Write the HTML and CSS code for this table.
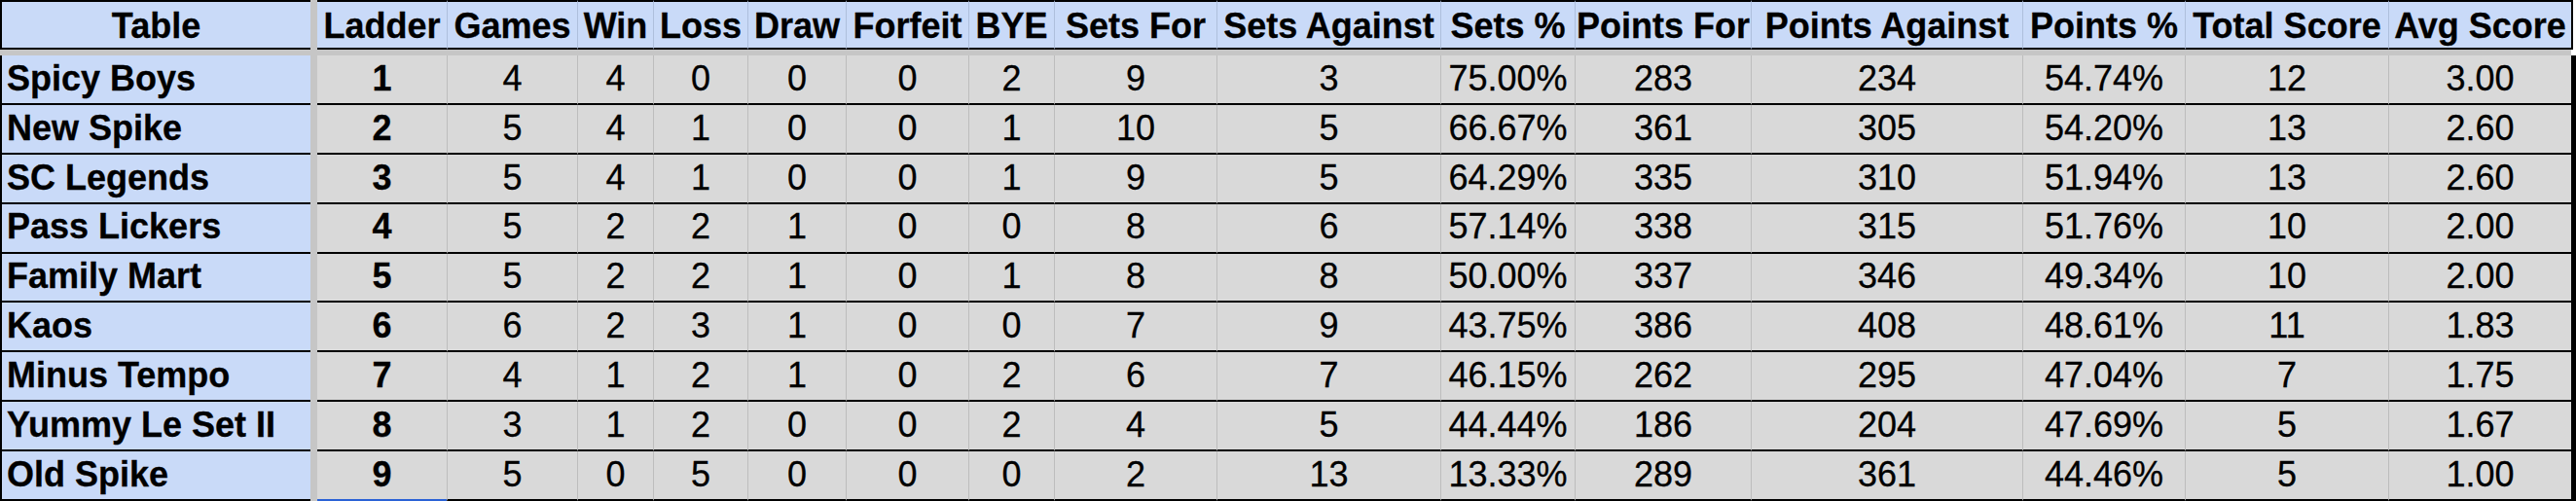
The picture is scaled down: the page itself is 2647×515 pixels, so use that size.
FILE: index.html
```html
<!DOCTYPE html>
<html lang="en">
<head>
<meta charset="utf-8">
<title>Ladder</title>
<link rel="stylesheet" href="styles.css">
</head>
<body>
<div class="sheet">
  <div class="freeze-col"></div>
  <div class="freeze-row"></div>

  <div class="hd name"><span class="t">Table</span></div>
  <div class="hd first"><span class="t">Ladder</span></div>
  <div class="hd"><span class="t">Games</span></div>
  <div class="hd"><span class="t">Win</span></div>
  <div class="hd"><span class="t">Loss</span></div>
  <div class="hd"><span class="t">Draw</span></div>
  <div class="hd"><span class="t">Forfeit</span></div>
  <div class="hd"><span class="t">BYE</span></div>
  <div class="hd"><span class="t">Sets For</span></div>
  <div class="hd"><span class="t">Sets Against</span></div>
  <div class="hd"><span class="t">Sets %</span></div>
  <div class="hd"><span class="t">Points For</span></div>
  <div class="hd"><span class="t">Points Against</span></div>
  <div class="hd"><span class="t">Points %</span></div>
  <div class="hd"><span class="t">Total Score</span></div>
  <div class="hd last"><span class="t">Avg Score</span></div>

  <div class="team"><span class="t">Spicy Boys</span></div><div class="c rank"><span class="t">1</span></div><div class="c"><span class="t">4</span></div><div class="c"><span class="t">4</span></div><div class="c"><span class="t">0</span></div><div class="c"><span class="t">0</span></div><div class="c"><span class="t">0</span></div><div class="c"><span class="t">2</span></div><div class="c"><span class="t">9</span></div><div class="c"><span class="t">3</span></div><div class="c"><span class="t">75.00%</span></div><div class="c"><span class="t">283</span></div><div class="c"><span class="t">234</span></div><div class="c"><span class="t">54.74%</span></div><div class="c"><span class="t">12</span></div><div class="c end"><span class="t">3.00</span></div>
  <div class="team"><span class="t">New Spike</span></div><div class="c rank"><span class="t">2</span></div><div class="c"><span class="t">5</span></div><div class="c"><span class="t">4</span></div><div class="c"><span class="t">1</span></div><div class="c"><span class="t">0</span></div><div class="c"><span class="t">0</span></div><div class="c"><span class="t">1</span></div><div class="c"><span class="t">10</span></div><div class="c"><span class="t">5</span></div><div class="c"><span class="t">66.67%</span></div><div class="c"><span class="t">361</span></div><div class="c"><span class="t">305</span></div><div class="c"><span class="t">54.20%</span></div><div class="c"><span class="t">13</span></div><div class="c end"><span class="t">2.60</span></div>
  <div class="team"><span class="t">SC Legends</span></div><div class="c rank"><span class="t">3</span></div><div class="c"><span class="t">5</span></div><div class="c"><span class="t">4</span></div><div class="c"><span class="t">1</span></div><div class="c"><span class="t">0</span></div><div class="c"><span class="t">0</span></div><div class="c"><span class="t">1</span></div><div class="c"><span class="t">9</span></div><div class="c"><span class="t">5</span></div><div class="c"><span class="t">64.29%</span></div><div class="c"><span class="t">335</span></div><div class="c"><span class="t">310</span></div><div class="c"><span class="t">51.94%</span></div><div class="c"><span class="t">13</span></div><div class="c end"><span class="t">2.60</span></div>
  <div class="team"><span class="t">Pass Lickers</span></div><div class="c rank"><span class="t">4</span></div><div class="c"><span class="t">5</span></div><div class="c"><span class="t">2</span></div><div class="c"><span class="t">2</span></div><div class="c"><span class="t">1</span></div><div class="c"><span class="t">0</span></div><div class="c"><span class="t">0</span></div><div class="c"><span class="t">8</span></div><div class="c"><span class="t">6</span></div><div class="c"><span class="t">57.14%</span></div><div class="c"><span class="t">338</span></div><div class="c"><span class="t">315</span></div><div class="c"><span class="t">51.76%</span></div><div class="c"><span class="t">10</span></div><div class="c end"><span class="t">2.00</span></div>
  <div class="team"><span class="t">Family Mart</span></div><div class="c rank"><span class="t">5</span></div><div class="c"><span class="t">5</span></div><div class="c"><span class="t">2</span></div><div class="c"><span class="t">2</span></div><div class="c"><span class="t">1</span></div><div class="c"><span class="t">0</span></div><div class="c"><span class="t">1</span></div><div class="c"><span class="t">8</span></div><div class="c"><span class="t">8</span></div><div class="c"><span class="t">50.00%</span></div><div class="c"><span class="t">337</span></div><div class="c"><span class="t">346</span></div><div class="c"><span class="t">49.34%</span></div><div class="c"><span class="t">10</span></div><div class="c end"><span class="t">2.00</span></div>
  <div class="team"><span class="t">Kaos</span></div><div class="c rank"><span class="t">6</span></div><div class="c"><span class="t">6</span></div><div class="c"><span class="t">2</span></div><div class="c"><span class="t">3</span></div><div class="c"><span class="t">1</span></div><div class="c"><span class="t">0</span></div><div class="c"><span class="t">0</span></div><div class="c"><span class="t">7</span></div><div class="c"><span class="t">9</span></div><div class="c"><span class="t">43.75%</span></div><div class="c"><span class="t">386</span></div><div class="c"><span class="t">408</span></div><div class="c"><span class="t">48.61%</span></div><div class="c"><span class="t">11</span></div><div class="c end"><span class="t">1.83</span></div>
  <div class="team"><span class="t">Minus Tempo</span></div><div class="c rank"><span class="t">7</span></div><div class="c"><span class="t">4</span></div><div class="c"><span class="t">1</span></div><div class="c"><span class="t">2</span></div><div class="c"><span class="t">1</span></div><div class="c"><span class="t">0</span></div><div class="c"><span class="t">2</span></div><div class="c"><span class="t">6</span></div><div class="c"><span class="t">7</span></div><div class="c"><span class="t">46.15%</span></div><div class="c"><span class="t">262</span></div><div class="c"><span class="t">295</span></div><div class="c"><span class="t">47.04%</span></div><div class="c"><span class="t">7</span></div><div class="c end"><span class="t">1.75</span></div>
  <div class="team"><span class="t">Yummy Le Set II</span></div><div class="c rank"><span class="t">8</span></div><div class="c"><span class="t">3</span></div><div class="c"><span class="t">1</span></div><div class="c"><span class="t">2</span></div><div class="c"><span class="t">0</span></div><div class="c"><span class="t">0</span></div><div class="c"><span class="t">2</span></div><div class="c"><span class="t">4</span></div><div class="c"><span class="t">5</span></div><div class="c"><span class="t">44.44%</span></div><div class="c"><span class="t">186</span></div><div class="c"><span class="t">204</span></div><div class="c"><span class="t">47.69%</span></div><div class="c"><span class="t">5</span></div><div class="c end"><span class="t">1.67</span></div>
  <div class="team"><span class="t">Old Spike</span></div><div class="c rank sel"><span class="t">9</span></div><div class="c"><span class="t">5</span></div><div class="c"><span class="t">0</span></div><div class="c"><span class="t">5</span></div><div class="c"><span class="t">0</span></div><div class="c"><span class="t">0</span></div><div class="c"><span class="t">0</span></div><div class="c"><span class="t">2</span></div><div class="c"><span class="t">13</span></div><div class="c"><span class="t">13.33%</span></div><div class="c"><span class="t">289</span></div><div class="c"><span class="t">361</span></div><div class="c"><span class="t">44.46%</span></div><div class="c"><span class="t">5</span></div><div class="c end"><span class="t">1.00</span></div>
</div>
</body>
</html>
```

FILE: styles.css
```css
html, body {
  margin: 0;
  padding: 0;
  background: #ffffff;
}

.sheet {
  display: grid;
  grid-template-columns: 319px 7px 133px 134px 78px 97px 101px 126px 88px 167px 230px 138px 181px 279px 167px 209px 193px;
  grid-template-rows: 51px 6px repeat(9, 50.9px);
  width: 2647px;
  font-family: "Liberation Sans", Arial, sans-serif;
  font-size: 36px;
  color: #000;
}

.freeze-col {
  grid-column: 2;
  grid-row: 1 / -1;
  background: #c6c6c6;
}

.freeze-row {
  grid-column: 1 / -1;
  grid-row: 2;
  background: #c6c6c6;
  margin-right: 5px;
}

.sheet > div {
  box-sizing: border-box;
  min-width: 0;
  white-space: nowrap;
  overflow: hidden;
}

.t {
  display: inline-block;
  line-height: 1.15;
  -webkit-text-stroke: 0.3px #000;
}

.hd {
  background: #c9daf8;
  font-weight: bold;
  display: flex;
  align-items: center;
  justify-content: center;
  padding-top: 2px;
  border-top: 2px solid #000;
  border-bottom: 2px solid #000;
  border-left: 1px solid #aebfdc;
}

.hd.name {
  border-left: 2px solid #000;
}

.hd.first {
  border-left: 0;
}

.hd.last {
  border-right: 2px solid #000;
  margin-right: 3px;
}

.team {
  background: #c9daf8;
  font-weight: bold;
  display: flex;
  align-items: center;
  padding-left: 5px;
  padding-bottom: 2px;
  border-left: 2px solid #000;
  border-bottom: 2px solid #000;
}

.c {
  background: #d9d9d9;
  display: flex;
  align-items: center;
  justify-content: center;
  padding-bottom: 2px;
  border-left: 1px solid #bdbdbd;
  border-bottom: 2px solid #000;
}

.c.rank {
  font-weight: bold;
  border-left: 0;
}

.c.sel {
  border-bottom-color: #2a62d6;
}

.c.end {
  border-right: 5px solid #000;
}
```
